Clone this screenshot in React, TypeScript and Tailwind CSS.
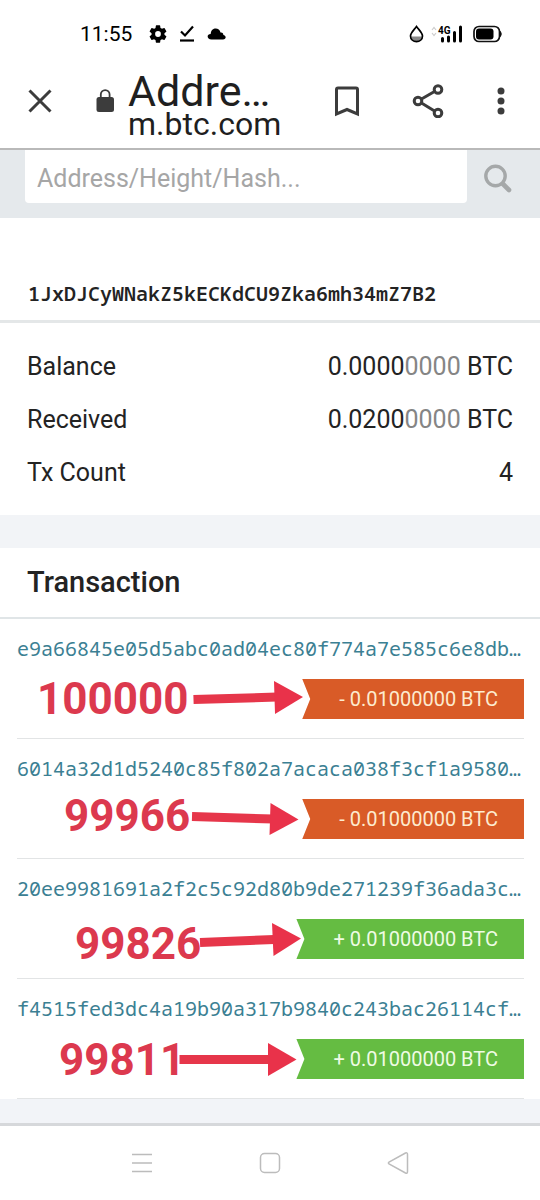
import React from 'react';

type Tx = {
  hash: string;
  amount: string;
  incoming: boolean;
  note: string;
  notePlace: string;
  shaft: string;
  head: string;
};

const transactions: Tx[] = [
  {
    hash: 'e9a66845e05d5abc0ad04ec80f774a7e585c6e8db…',
    amount: '- 0.01000000 BTC',
    incoming: false,
    note: '100000',
    notePlace: 'left-[37px] top-[58px]',
    shaft: 'M193.5 80.5 L277 78',
    head: '274,62 275,95 303,78',
  },
  {
    hash: '6014a32d1d5240c85f802a7acaca038f3cf1a9580…',
    amount: '- 0.01000000 BTC',
    incoming: false,
    note: '99966',
    notePlace: 'left-[64px] top-[55px]',
    shaft: 'M192 77.5 L273 80',
    head: '270.5,64 269.5,96 298.5,80.5',
  },
  {
    hash: '20ee9981691a2f2c5c92d80b9de271239f36ada3c…',
    amount: '+ 0.01000000 BTC',
    incoming: true,
    note: '99826',
    notePlace: 'left-[75px] top-[63px]',
    shaft: 'M200 83.5 L274 80.5',
    head: '272,64 273.5,97 301,79.5',
  },
  {
    hash: 'f4515fed3dc4a19b90a317b9840c243bac26114cf…',
    amount: '+ 0.01000000 BTC',
    incoming: true,
    note: '99811',
    notePlace: 'left-[59px] top-[59px]',
    shaft: 'M179.5 80.5 L270 80.5',
    head: '268,64 268,97 296.5,80.5',
  },
];

function StatusBar() {
  return (
    <div className="flex h-[67px] items-center justify-between pl-20 pr-[38px] text-black">
      <div className="flex items-center">
        <span className="w-[69px] text-[21px] leading-6">11:55</span>
        <svg className="h-[18px] w-[18px]" viewBox="2 2 20 20" fill="currentColor" aria-hidden="true">
          <path d="M19.14 12.94c.04-.3.06-.61.06-.94 0-.32-.02-.64-.07-.94l2.03-1.58a.49.49 0 0 0 .12-.61l-1.92-3.32a.49.49 0 0 0-.59-.22l-2.39.96a7 7 0 0 0-1.62-.94l-.36-2.54a.48.48 0 0 0-.48-.41h-3.84a.48.48 0 0 0-.47.41l-.36 2.54c-.59.24-1.13.57-1.62.94l-2.39-.96a.48.48 0 0 0-.59.22L2.74 8.87a.48.48 0 0 0 .12.61l2.03 1.58c-.05.3-.09.63-.09.94s.02.64.07.94l-2.03 1.58a.49.49 0 0 0-.12.61l1.92 3.32c.12.22.37.29.59.22l2.39-.96c.5.38 1.03.7 1.62.94l.36 2.54c.05.24.24.41.48.41h3.84c.24 0 .44-.17.47-.41l.36-2.54a7 7 0 0 0 1.62-.94l2.39.96c.22.08.47 0 .59-.22l1.92-3.32a.48.48 0 0 0-.12-.61zM12 15.2a3.2 3.2 0 1 1 0-6.4 3.2 3.2 0 0 1 0 6.4z" />
        </svg>
        <svg className="ml-3 h-[17px] w-[16px]" viewBox="0 0 16 17" fill="none" stroke="currentColor" aria-hidden="true">
          <path d="M2 6.5 L6 10.5 L14 1.5" strokeWidth="2.2" />
          <path d="M1 15.5 H15" strokeWidth="2.2" />
        </svg>
        <svg className="ml-3 h-3 w-[19px]" viewBox="0 0 19 12" fill="currentColor" aria-hidden="true">
          <path d="M4.5 11.5 C-.5 11.5 -.5 6 3.7 6 C4 -1 12.5 -1 13.5 4.5 C16 4.2 16.5 6 16.3 7 C19.5 7.5 19.5 11.5 16 11.5 Z" />
        </svg>
      </div>
      <div className="flex items-center">
        <svg className="h-[18px] w-[15px]" viewBox="0 0 15 18" aria-hidden="true">
          <path d="M2 11.5 H13 C12.5 15 10.5 16.5 7.5 16.5 S2.5 15 2 11.5Z" fill="#888" />
          <path d="M7.5 1.5 C5 5 1.5 8 1.5 11 C1.5 18.5 13.5 18.5 13.5 11 C13.5 8 10 5 7.5 1.5Z" fill="none" stroke="#000" strokeWidth="1.7" />
        </svg>
        <div className="relative ml-[7px] h-[18px] w-[32px]">
          <svg className="h-[18px] w-[32px]" viewBox="0 0 32 18" aria-hidden="true">
            <path d="M1 5 L3 2.5 L5 5 M1 8 L3 10.5 L5 8" fill="none" stroke="#ccc" strokeWidth="1.2" />
            <path d="M11.5 13.5V16 M17.5 12V16 M23.5 7.5V16 M29.5 2V16" stroke="#000" strokeWidth="3" strokeLinecap="round" />
          </svg>
          <span className="absolute -top-px left-[7px] text-[10px] font-bold leading-[14px]">4G</span>
        </div>
        <svg className="ml-[10px] h-[18px] w-[29px]" viewBox="0 0 29 18" aria-hidden="true">
          <rect x="1" y="1.5" width="25.5" height="15" rx="5" fill="none" stroke="#111" strokeWidth="1.7" />
          <rect x="3" y="3.5" width="17.5" height="11" rx="3" fill="#000" />
          <path d="M27.5 6.5 Q29 9 27.5 11.5Z" stroke="#111" />
        </svg>
      </div>
    </div>
  );
}

function BrowserBar() {
  return (
    <header className="flex h-[83px] items-center border-b-2 border-[#b9b9b9] pb-[13px] pl-7 pr-[34px] text-[#3c3c3c]">
      <button aria-label="Close" className="flex">
        <svg className="h-6 w-6" viewBox="0 0 24 24" fill="none" stroke="currentColor" strokeWidth="3" aria-hidden="true">
          <path d="M1.5 1.5 L22.5 22.5 M22.5 1.5 L1.5 22.5" />
        </svg>
      </button>
      <svg className="ml-[43px] h-6 w-5" viewBox="0 0 20 24" aria-hidden="true">
        <rect x="1.5" y="8" width="17.5" height="15" rx="2.5" fill="currentColor" />
        <path d="M5.8 9 V5.5 a4.4 4.4 0 0 1 8.8 0 V9" fill="none" stroke="currentColor" strokeWidth="1.8" />
      </svg>
      <div className="ml-[13px] min-w-0 flex-1 pt-[7px] text-[#1f1f1f]">
        <div className="text-[43px] leading-[38px]">Addre…</div>
        <div className="text-[32px] leading-[28px]">m.btc.com</div>
      </div>
      <div className="flex items-center">
        <button aria-label="Bookmark" className="flex">
          <svg className="h-[31px] w-[26px]" viewBox="0 0 26 31" fill="none" stroke="currentColor" strokeWidth="3" aria-hidden="true">
            <path d="M2.5 28 V3.5 Q2.5 2 4 2 H22 Q23.5 2 23.5 3.5 V28 L13 23.5 Z" />
          </svg>
        </button>
        <button aria-label="Share" className="ml-[52px] flex">
          <svg className="h-[34px] w-[32px]" viewBox="0 0 32 34" fill="none" stroke="currentColor" strokeWidth="3" aria-hidden="true">
            <circle cx="6" cy="17" r="3.8" />
            <circle cx="26" cy="5.5" r="3.8" />
            <circle cx="26" cy="29" r="3.8" />
            <path d="M9.5 15 L22.5 7.5 M9.5 19 L22.5 27" />
          </svg>
        </button>
        <button aria-label="More options" className="ml-[52px] flex">
          <svg className="h-[28px] w-[10px]" viewBox="0 0 10 28" fill="currentColor" aria-hidden="true">
            <circle cx="5" cy="4" r="3.5" />
            <circle cx="5" cy="14" r="3.5" />
            <circle cx="5" cy="24" r="3.5" />
          </svg>
        </button>
      </div>
    </header>
  );
}

function Amount({ strong, faint }: { strong: string; faint: string }) {
  return (
    <dd>
      {strong}
      <span className="text-[#858585]">{faint}</span> BTC
    </dd>
  );
}

function Transaction({ tx }: { tx: Tx }) {
  return (
    <li className="relative pl-[17px] pr-4">
      <div className="border-b border-[#e2e4e5] pb-[19px] pt-4">
        <a
          href="#tx"
          className="block overflow-hidden whitespace-nowrap font-['Noto_Sans_Mono','DejaVu_Sans_Mono',monospace] text-[20px] leading-7 text-[#3b8093]"
        >
          {tx.hash}
        </a>
        <div className="mt-4 flex justify-end">
          <span
            className={
              'h-10 pl-[37px] pr-[26px] text-[20px] leading-10 [clip-path:polygon(0_0,100%_0,100%_100%,0_100%,8px_50%)] ' +
              (tx.incoming ? 'bg-[#65bc42] text-[#effbe4]' : 'bg-[#d95b27] text-[#fdebcf]')
            }
          >
            {tx.amount}
          </span>
        </div>
      </div>
      <span className={'absolute text-[44px] font-bold leading-[44px] text-[#dc394e] ' + tx.notePlace}>{tx.note}</span>
      <svg className="pointer-events-none absolute left-0 top-0 h-[120px] w-[310px]" viewBox="0 0 310 120" aria-hidden="true">
        <path d={tx.shaft} stroke="#e6364a" strokeWidth="9" />
        <polygon points={tx.head} fill="#e9324a" />
      </svg>
    </li>
  );
}

export default function App() {
  return (
    <div className="w-full bg-white font-['Roboto',sans-serif] text-[#232323]">
      <StatusBar />
      <BrowserBar />
      <main>
        <form className="flex bg-[#e5e9ec] pb-[15px] pl-[25px]" onSubmit={(e) => e.preventDefault()}>
          <input
            type="text"
            aria-label="Search address, height or hash"
            placeholder="Address/Height/Hash..."
            className="h-[53px] min-w-0 flex-1 rounded-b-[4px] bg-white px-3 pt-[3px] text-[25px] outline-none placeholder:text-[#a6a6a6]"
          />
          <button aria-label="Search" className="flex w-[73px] items-center pl-4 pt-1 text-[#a5a8a9]">
            <svg className="h-[29px] w-[29px]" viewBox="0 0 29 29" fill="none" stroke="currentColor" aria-hidden="true">
              <circle cx="12.5" cy="12" r="9.7" strokeWidth="3.4" />
              <path d="M20 20 L26 26" strokeWidth="4.6" strokeLinecap="round" />
            </svg>
          </button>
        </form>

        <section>
          <h1 className="border-b-[3px] border-[#e4e7e8] px-7 pb-3 pt-[62px] font-['Noto_Sans_Mono','DejaVu_Sans_Mono',monospace] text-[20px] font-semibold leading-7">
            1JxDJCyWNakZ5kECKdCU9Zka6mh34mZ7B2
          </h1>
          <dl className="px-[27px] pb-4 pt-[17px] text-[25px] leading-[53px]">
            <div className="flex justify-between">
              <dt>Balance</dt>
              <Amount strong="0.0000" faint="0000" />
            </div>
            <div className="flex justify-between">
              <dt>Received</dt>
              <Amount strong="0.0200" faint="0000" />
            </div>
            <div className="flex justify-between">
              <dt>Tx Count</dt>
              <dd>4</dd>
            </div>
          </dl>
        </section>

        <section className="border-t-[33px] border-[#f2f4f7]">
          <h2 className="border-b-2 border-[#e0e5e7] px-[27px] text-[29px] font-medium leading-[69px]">Transaction</h2>
          <ul>
            {transactions.map((tx) => (
              <Transaction key={tx.hash} tx={tx} />
            ))}
          </ul>
        </section>
        <div className="h-6 bg-[#f2f4f8]" />
      </main>

      <nav className="flex h-[77px] items-center justify-center gap-[106px] border-t-[3px] border-[#d6d8db] text-[#bcbcbc]">
        <button aria-label="Recent apps" className="flex">
          <svg className="h-6 w-[22px]" viewBox="0 0 22 24" stroke="currentColor" strokeWidth="1.5" aria-hidden="true">
            <path d="M1 3.5 H21 M1 12 H21 M1 20.5 H21" />
          </svg>
        </button>
        <button aria-label="Home" className="flex">
          <svg className="h-6 w-[22px]" viewBox="0 0 22 24" fill="none" stroke="currentColor" strokeWidth="1.5" aria-hidden="true">
            <rect x="1.5" y="2.5" width="19" height="19" rx="4" />
          </svg>
        </button>
        <button aria-label="Back" className="flex">
          <svg className="h-6 w-[22px]" viewBox="0 0 22 24" fill="none" stroke="currentColor" strokeWidth="1.5" aria-hidden="true">
            <path d="M18.5 2 L2 11 Q.8 12 2 13 L18.5 22 Q20.5 22.8 20.5 20.5 V3.5 Q20.5 1.2 18.5 2Z" />
          </svg>
        </button>
      </nav>
    </div>
  );
}
